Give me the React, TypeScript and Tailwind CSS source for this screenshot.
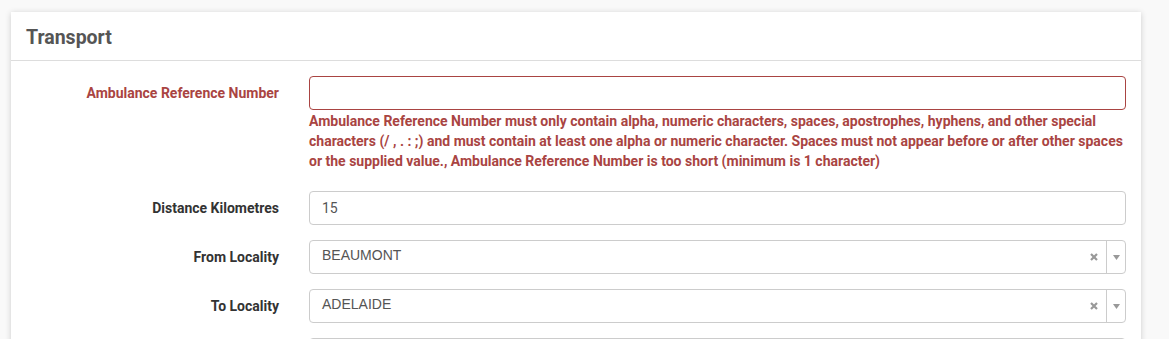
import React from "react";

const roboto = { fontFamily: "Roboto, 'Liberation Sans', sans-serif" };

function SelectBox({ value }: { value: string }) {
  return (
    <div className="flex h-[34px] items-stretch rounded-[4px] border border-[#cccccc] bg-white">
      <div className="flex flex-1 items-center pb-[3px] pl-[12px] text-[14px] text-[#555555]" style={{ fontFamily: "'Liberation Sans', Arial, sans-serif" }}>
        {value}
      </div>
      <div className="flex w-[25px] items-center justify-center text-[#999999]">
        <svg width="8" height="8" viewBox="0 0 8 8">
          <path d="M1 1 L7 7 M7 1 L1 7" stroke="#999" strokeWidth="2.2" />
        </svg>
      </div>
      <div className="my-0 w-px bg-[#cccccc]" />
      <div className="flex w-[18px] items-center justify-center">
        <svg width="7" height="5" viewBox="0 0 7 5">
          <path d="M0 0 L7 0 L3.5 5 Z" fill="#999" />
        </svg>
      </div>
    </div>
  );
}

function Row({ label, children, error = false, mt }: { label: string; children: React.ReactNode; error?: boolean; mt: string }) {
  return (
    <div className={`flex ${mt}`}>
      <div
        className={`w-[268px] shrink-0 pt-[7px] text-right text-[14px] font-bold leading-[20px] ${error ? "text-[#a94442]" : "text-[#333333]"}`}
      >
        {label}
      </div>
      <div className="ml-[30px] flex-1">{children}</div>
    </div>
  );
}

export default function App() {
  return (
    <div className="h-[339px] w-[1169px] overflow-hidden bg-[#f9f9f9] pt-[12px] pl-[11px]" style={roboto}>
      <div className="h-[400px] w-[1130px] bg-white shadow-[0_1px_6px_rgba(0,0,0,0.18)]">
        <div className="flex h-[49px] items-center border-b border-[#dddddd] px-[15px] pt-[4px]">
          <h2 className="text-[19.5px] font-bold text-[#555555]">Transport</h2>
        </div>
        <div className="pr-[15px]">
          <Row label="Ambulance Reference Number" error mt="mt-[15px]">
            <div className="h-[34px] rounded-[4px] border border-[#a94442] bg-white" />
            <div className="mt-[1px] text-[14px] font-bold leading-[20px] text-[#a94442]">
              Ambulance Reference Number must only contain alpha, numeric characters, spaces, apostrophes, hyphens, and other special characters (/ , . : ;) and must contain at least one alpha or numeric character. Spaces must not appear before or after other spaces or the supplied value., Ambulance Reference Number is too short (minimum is 1 character)
            </div>
          </Row>
          <Row label="Distance Kilometres" mt="mt-[20px]">
            <div className="flex h-[34px] items-center rounded-[4px] border border-[#cccccc] bg-white pl-[12px] text-[14px] text-[#555555]">
              15
            </div>
          </Row>
          <Row label="From Locality" mt="mt-[15px]">
            <SelectBox value="BEAUMONT" />
          </Row>
          <Row label="To Locality" mt="mt-[15px]">
            <SelectBox value="ADELAIDE" />
          </Row>
          <Row label="" mt="mt-[15px]">
            <div className="h-[34px] rounded-[4px] border border-[#cccccc] bg-white" />
          </Row>
        </div>
      </div>
    </div>
  );
}
